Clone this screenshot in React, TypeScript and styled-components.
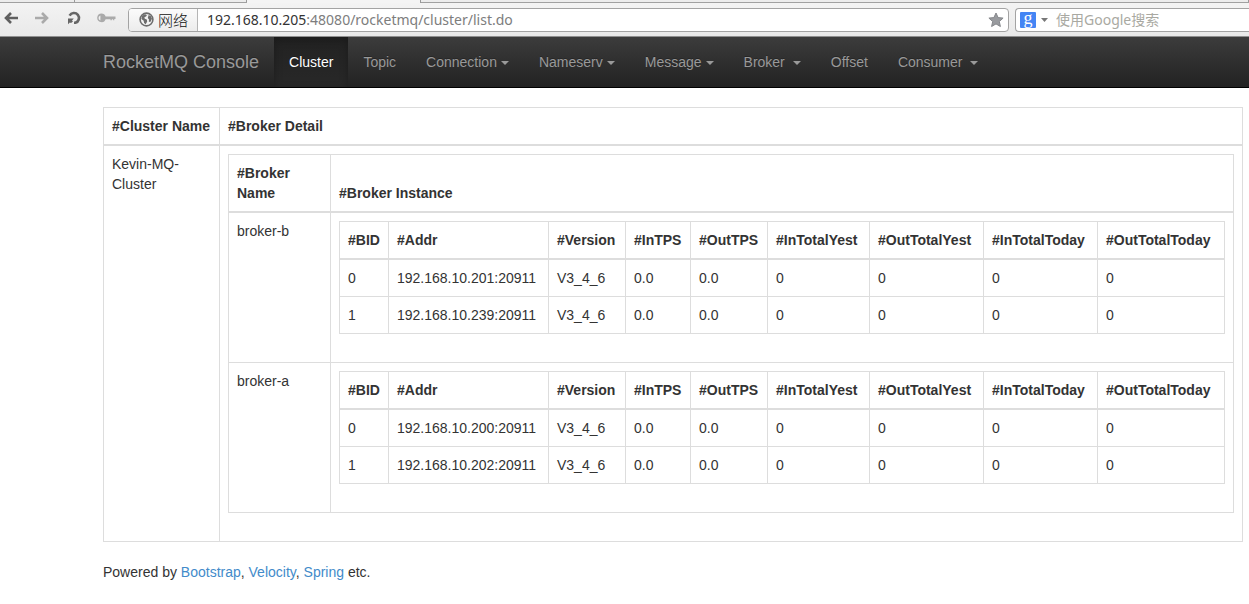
import React from "react";
import styled, { createGlobalStyle, css } from "styled-components";

const GlobalStyle = createGlobalStyle`
  *, *::before, *::after { box-sizing: border-box; }
  body {
    margin: 0;
    background: #fff;
    color: #333;
    font: 14px/20px "Liberation Sans", Arial, sans-serif;
  }
  a { color: #428bca; text-decoration: none; }
`;

/* Browser chrome */

const Chrome = styled.header`
  background: linear-gradient(#f4f4f4, #e9e9e9);
  border-bottom: 1px solid #8f8f8f;
  overflow: hidden;
`;

const TabStrip = styled.div`
  display: flex;
  height: 3px;
  border-bottom: 1px solid #a0a0a0;
  background: #ececec;
`;

const Tab = styled.div<{ $width?: number; $active?: boolean }>`
  flex: ${(p) => (p.$width ? `0 0 ${p.$width}px` : "1")};
  height: ${(p) => (p.$active ? 3 : 2)}px;
  border-right: 1px solid #999;
  ${(p) => p.$active && css`background: #f4f4f4;`}
`;

const Toolbar = styled.div`
  display: flex;
  align-items: center;
  height: 33px;
  padding-left: 4px;
`;

const ToolButton = styled.button`
  display: flex;
  width: 31px;
  padding: 0 0 4px;
  border: 0;
  background: none;
`;

const fieldBox = css`
  display: flex;
  align-items: center;
  height: 24px;
  border: 1px solid #a3a3a3;
  background: #fff;
  font-family: "Noto Sans", "Noto Sans CJK SC", sans-serif;
  font-size: 14px;
`;

const AddressBar = styled.div`
  ${fieldBox}
  flex: 1;
  border-radius: 4px;
  padding-right: 4px;
  overflow: hidden;
`;

const Identity = styled.button`
  display: flex;
  align-items: center;
  gap: 4px;
  height: 22px;
  width: 69px;
  padding: 0 0 0 10px;
  border: 0;
  border-right: 1px solid #b5b5b5;
  background: linear-gradient(#fbfbfb, #ececec);
  color: #111;
  font: 300 15px/20px "Noto Sans CJK SC", sans-serif;
`;

const Url = styled.div`
  flex: 1;
  padding-left: 9px;
  color: #7d7d7d;
`;

const Host = styled.span`
  color: #333;
`;

const BareButton = styled.button`
  display: flex;
  padding: 0;
  border: 0;
  background: none;
`;

const SearchBox = styled.form`
  ${fieldBox}
  width: 234px;
  margin-left: 6px;
  padding-left: 4px;
  border-right: 0;
  border-radius: 4px 0 0 4px;
`;

const GoogleMark = styled.span`
  width: 16px;
  height: 16px;
  margin-right: 5px;
  border-radius: 1px;
  background: #4485f4;
  color: #fff;
  text-align: center;
  font: 18px/12px "Liberation Serif", serif;
`;

const SearchInput = styled.input`
  flex: 1;
  min-width: 0;
  margin-left: 8px;
  padding: 0;
  border: 0;
  background: none;
  font: inherit;
  &::placeholder { color: #a9a9a2; opacity: 1; }
`;

/* Page */

const Navbar = styled.nav`
  display: flex;
  min-height: 51px;
  padding-left: 88px;
  border-bottom: 1px solid #000;
  background: linear-gradient(#3c3c3c, #222);
`;

const Brand = styled.a`
  padding: 15px;
  color: #999;
  font-size: 18px;
  text-shadow: 0 -1px 0 rgba(0, 0, 0, 0.25);
`;

const NavList = styled.ul`
  display: flex;
  margin: 0;
  padding: 0;
  list-style: none;
`;

const NavLink = styled.a<{ $active?: boolean }>`
  display: flex;
  align-items: center;
  height: 50px;
  padding: 0 15px;
  color: ${(p) => (p.$active ? "#fff" : "#999")};
  text-shadow: 0 -1px 0 rgba(0, 0, 0, 0.25);
  ${(p) => p.$active && css`
    background: linear-gradient(#222, #282828);
    box-shadow: inset 0 3px 9px rgba(0, 0, 0, 0.25);
  `}
`;

const Caret = styled.span<{ $spaced?: boolean }>`
  margin: 2px 0 0 ${(p) => (p.$spaced ? 8 : 4)}px;
  border-top: 4px solid currentColor;
  border-left: 4px solid transparent;
  border-right: 4px solid transparent;
`;

const Container = styled.main`
  padding: 19px 6px 20px 103px;
`;

const Table = styled.table`
  width: 100%;
  margin-bottom: 20px;
  border: 1px solid #ddd;
  border-collapse: collapse;
  table-layout: fixed;
`;

const Column = styled.col<{ $width?: number }>`
  width: ${(p) => (p.$width ? `${p.$width}px` : "auto")};
`;

const HeadCell = styled.th`
  padding: 8px;
  border: 1px solid #ddd;
  border-bottom-width: 2px;
  text-align: left;
  vertical-align: bottom;
`;

const Cell = styled.td`
  padding: 8px;
  border: 1px solid #ddd;
  vertical-align: top;
`;

const Footer = styled.p`
  margin: 0;
`;

const columns: { title: string; width?: number }[] = [
  { title: "#BID", width: 49 },
  { title: "#Addr", width: 160 },
  { title: "#Version", width: 77 },
  { title: "#InTPS", width: 65 },
  { title: "#OutTPS", width: 77 },
  { title: "#InTotalYest", width: 102 },
  { title: "#OutTotalYest", width: 114 },
  { title: "#InTotalToday", width: 114 },
  { title: "#OutTotalToday" },
];

const brokers = [
  { name: "broker-b", addrs: ["192.168.10.201:20911", "192.168.10.239:20911"] },
  { name: "broker-a", addrs: ["192.168.10.200:20911", "192.168.10.202:20911"] },
];

const navItems: { label: string; active?: boolean; caret?: "tight" | "spaced" }[] = [
  { label: "Cluster", active: true },
  { label: "Topic" },
  { label: "Connection", caret: "tight" },
  { label: "Nameserv", caret: "tight" },
  { label: "Message", caret: "tight" },
  { label: "Broker", caret: "spaced" },
  { label: "Offset" },
  { label: "Consumer", caret: "spaced" },
];

const ArrowIcon = ({ color, flip }: { color: string; flip?: boolean }) => (
  <svg width="14" height="14" viewBox="0 0 14 14" fill="none" stroke={color} strokeWidth="2.6">
    <path d={flip ? "M0 7H12M7 2l5 5-5 5" : "M14 7H2M7 2L2 7l5 5"} />
  </svg>
);

const ReloadIcon = () => (
  <svg width="16" height="14" viewBox="0 0 16 14">
    <path d="M3.6 4.6A5 5 0 1 1 9.4 11.8H8" fill="none" stroke="#666" strokeWidth="2.6" />
    <path d="M2 7.6H7.8L6 9.4 7 10.6 5 12 3.8 11.4 2 13.2z" fill="#666" />
  </svg>
);

const KeyIcon = () => (
  <svg width="20" height="14" viewBox="0 0 20 14">
    <path fillRule="evenodd" d="M4.5 2.5a4.3 4.3 0 0 1 4.1 3H18.5v2.6h-1.2v1.2h-1.2V8.2h-1.3v1.1h-1.3V8.2H8.6a4.3 4.3 0 1 1-4.1-5.7zM3.4 4.4a2.6 2.6 0 0 0 0 5z" fill="#aaa" />
  </svg>
);

const GlobeIcon = () => (
  <svg width="15" height="15" viewBox="0 0 15 15">
    <circle cx="7.5" cy="7.5" r="6.4" fill="#f2f2f2" stroke="#6d6d6d" strokeWidth="1.6" />
    <path d="M3 3.8l3-1.6 2 .8-1 1.6-1.6.6.4 1.6 2 .8.4 1.8-1.5 2.8-1.6-1.2-.4-2.2L2.4 7zM9.6 3l2.4 1.2 1 2.6-1.8 3.4-1.4-.8.2-2-1.2-1.4z" fill="#6d6d6d" />
  </svg>
);

const StarIcon = () => (
  <svg width="16" height="16" viewBox="0 0 16 16">
    <path d="M8 1l2.1 4.6 5 .5-3.8 3.4 1.1 5L8 11.9l-4.4 2.6 1.1-5L.9 6.1l5-.5z" fill="#999b9f" stroke="#85878b" strokeWidth="1" />
  </svg>
);

const DropIcon = () => (
  <svg width="7" height="4" viewBox="0 0 7 4">
    <path d="M0 0h7L3.5 4z" fill="#777" />
  </svg>
);

const InstanceTable = ({ addrs }: { addrs: string[] }) => (
  <Table>
    <colgroup>
      {columns.map((c) => <Column key={c.title} $width={c.width} />)}
    </colgroup>
    <thead>
      <tr>{columns.map((c) => <HeadCell key={c.title}>{c.title}</HeadCell>)}</tr>
    </thead>
    <tbody>
      {addrs.map((addr, id) => (
        <tr key={addr}>
          {[String(id), addr, "V3_4_6", "0.0", "0.0", "0", "0", "0", "0"].map((v, i) => (
            <Cell key={columns[i].title}>{v}</Cell>
          ))}
        </tr>
      ))}
    </tbody>
  </Table>
);

export default function App() {
  return (
    <>
      <GlobalStyle />
      <Chrome>
        <TabStrip>
          <Tab $width={75} />
          <Tab $width={172} />
          <Tab $width={174} $active />
          <Tab />
        </TabStrip>
        <Toolbar>
          <ToolButton aria-label="Back"><ArrowIcon color="#5f5f5f" /></ToolButton>
          <ToolButton aria-label="Forward"><ArrowIcon color="#aaa" flip /></ToolButton>
          <ToolButton aria-label="Reload"><ReloadIcon /></ToolButton>
          <ToolButton aria-label="Passwords"><KeyIcon /></ToolButton>
          <AddressBar>
            <Identity><GlobeIcon />网络</Identity>
            <Url><Host>192.168.10.205</Host>:48080/rocketmq/cluster/list.do</Url>
            <BareButton aria-label="Bookmark"><StarIcon /></BareButton>
          </AddressBar>
          <SearchBox>
            <GoogleMark>g</GoogleMark>
            <BareButton type="button" aria-label="Search engines"><DropIcon /></BareButton>
            <SearchInput aria-label="Search" placeholder="使用Google搜索" />
          </SearchBox>
        </Toolbar>
      </Chrome>
      <Navbar>
        <Brand href="#">RocketMQ Console</Brand>
        <NavList>
          {navItems.map((item) => (
            <li key={item.label}>
              <NavLink href="#" $active={item.active}>
                {item.label}
                {item.caret && <Caret $spaced={item.caret === "spaced"} />}
              </NavLink>
            </li>
          ))}
        </NavList>
      </Navbar>
      <Container>
        <Table>
          <colgroup>
            <Column $width={116} />
            <Column />
          </colgroup>
          <thead>
            <tr>
              <HeadCell>#Cluster Name</HeadCell>
              <HeadCell>#Broker Detail</HeadCell>
            </tr>
          </thead>
          <tbody>
            <tr>
              <Cell>Kevin-MQ-Cluster</Cell>
              <Cell>
                <Table>
                  <colgroup>
                    <Column $width={102} />
                    <Column />
                  </colgroup>
                  <thead>
                    <tr>
                      <HeadCell>#Broker Name</HeadCell>
                      <HeadCell>#Broker Instance</HeadCell>
                    </tr>
                  </thead>
                  <tbody>
                    {brokers.map((b) => (
                      <tr key={b.name}>
                        <Cell>{b.name}</Cell>
                        <Cell><InstanceTable addrs={b.addrs} /></Cell>
                      </tr>
                    ))}
                  </tbody>
                </Table>
              </Cell>
            </tr>
          </tbody>
        </Table>
        <Footer>
          Powered by <a href="#">Bootstrap</a>, <a href="#">Velocity</a>, <a href="#">Spring</a> etc.
        </Footer>
      </Container>
    </>
  );
}
